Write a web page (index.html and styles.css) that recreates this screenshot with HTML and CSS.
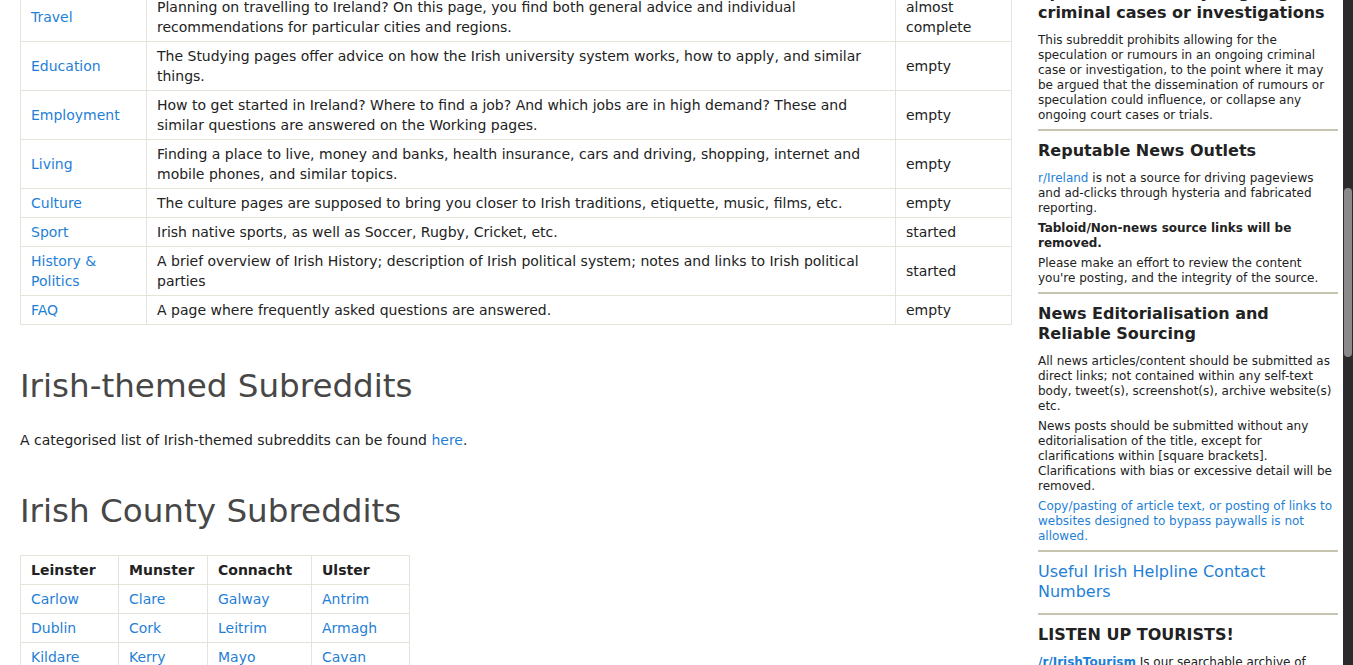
FILE: index.html
```html
<!DOCTYPE html>
<html lang="en">
<head>
<meta charset="utf-8">
<title>Ireland wiki</title>
<link rel="stylesheet" href="styles.css">
</head>
<body>
<div class="page">
  <main class="main">
    <table class="topics">
      <colgroup><col class="c1"><col class="c2"><col class="c3"></colgroup>
      <tbody>
        <tr><td><a href="#">Travel</a></td><td>Planning on travelling to Ireland? On this page, you find both general advice and individual recommendations for particular cities and regions.</td><td>almost complete</td></tr>
        <tr><td><a href="#">Education</a></td><td>The Studying pages offer advice on how the Irish university system works, how to apply, and similar things.</td><td>empty</td></tr>
        <tr><td><a href="#">Employment</a></td><td>How to get started in Ireland? Where to find a job? And which jobs are in high demand? These and similar questions are answered on the Working pages.</td><td>empty</td></tr>
        <tr><td><a href="#">Living</a></td><td>Finding a place to live, money and banks, health insurance, cars and driving, shopping, internet and mobile phones, and similar topics.</td><td>empty</td></tr>
        <tr><td><a href="#">Culture</a></td><td>The culture pages are supposed to bring you closer to Irish traditions, etiquette, music, films, etc.</td><td>empty</td></tr>
        <tr><td><a href="#">Sport</a></td><td>Irish native sports, as well as Soccer, Rugby, Cricket, etc.</td><td>started</td></tr>
        <tr><td><a href="#">History &amp; Politics</a></td><td>A brief overview of Irish History; description of Irish political system; notes and links to Irish political parties</td><td>started</td></tr>
        <tr><td><a href="#">FAQ</a></td><td>A page where frequently asked questions are answered.</td><td>empty</td></tr>
      </tbody>
    </table>

    <h2 class="title">Irish-themed Subreddits</h2>
    <p class="lead">A categorised list of Irish-themed subreddits can be found <a href="#">here</a>.</p>

    <h2 class="title">Irish County Subreddits</h2>
    <table class="counties">
      <colgroup><col class="k1"><col class="k2"><col class="k3"><col class="k4"></colgroup>
      <thead>
        <tr><th>Leinster</th><th>Munster</th><th>Connacht</th><th>Ulster</th></tr>
      </thead>
      <tbody>
        <tr><td><a href="#">Carlow</a></td><td><a href="#">Clare</a></td><td><a href="#">Galway</a></td><td><a href="#">Antrim</a></td></tr>
        <tr><td><a href="#">Dublin</a></td><td><a href="#">Cork</a></td><td><a href="#">Leitrim</a></td><td><a href="#">Armagh</a></td></tr>
        <tr><td><a href="#">Kildare</a></td><td><a href="#">Kerry</a></td><td><a href="#">Mayo</a></td><td><a href="#">Cavan</a></td></tr>
      </tbody>
    </table>
  </main>

  <aside class="sidebar">
    <section class="block">
      <h3 class="side-h">Speculation on any ongoing<br>criminal cases or investigations</h3>
      <p class="side-p">This subreddit prohibits allowing for the speculation or rumours in an ongoing criminal case or investigation, to the point where it may be argued that the dissemination of rumours or speculation could influence, or collapse any ongoing court cases or trials.</p>
    </section>
    <section class="block">
      <h3 class="side-h">Reputable News Outlets</h3>
      <p class="side-p"><a href="#">r/Ireland</a> is not a source for driving pageviews and ad-clicks through hysteria and fabricated reporting.</p>
      <p class="side-p strong">Tabloid/Non-news source links will be removed.</p>
      <p class="side-p">Please make an effort to review the content you're posting, and the integrity of the source.</p>
    </section>
    <section class="block">
      <h3 class="side-h">News Editorialisation and Reliable Sourcing</h3>
      <p class="side-p">All news articles/content should be submitted as direct links; not contained within any self-text body, tweet(s), screenshot(s), archive website(s) etc.</p>
      <p class="side-p">News posts should be submitted without any editorialisation of the title, except for clarifications within [square brackets]. Clarifications with bias or excessive detail will be removed.</p>
      <p class="side-p"><a href="#">Copy/pasting of article text, or posting of links to websites designed to bypass paywalls is not allowed.</a></p>
    </section>
    <section class="block">
      <h3 class="side-link"><a href="#">Useful Irish Helpline Contact Numbers</a></h3>
    </section>
    <section class="block last">
      <h3 class="side-h">LISTEN UP TOURISTS!</h3>
      <p class="side-p"><a href="#" class="bold-link">/r/IrishTourism</a> Is our searchable archive of questions and answers for visitors.</p>
    </section>
  </aside>

  <div class="scrollbar"><div class="thumb"></div></div>
</div>
</body>
</html>
```

FILE: styles.css
```css
html, body {
  margin: 0;
  padding: 0;
  background: #ffffff;
}

body {
  font-family: "DejaVu Sans", Verdana, sans-serif;
  color: #222222;
}

a {
  color: #1f7fd6;
  text-decoration: none;
}

.page {
  display: flex;
  align-items: flex-start;
  height: 665px;
  overflow: hidden;
}

/* ---------- main column ---------- */
.main {
  flex: none;
  width: 992px;
  margin-left: 20px;
  margin-top: -8px;
  font-size: 14px;
  line-height: 20px;
}

.topics,
.counties {
  border-collapse: collapse;
  table-layout: fixed;
}

.topics {
  width: 992px;
}

.topics td,
.counties td,
.counties th {
  border: 1px solid #e6e3da;
  padding: 4px 10px;
  vertical-align: middle;
  text-align: left;
}

.c1 { width: 126px; }
.c3 { width: 116px; }

.title {
  margin: 42px 0 25px;
  font-size: 32.6px;
  line-height: 38px;
  font-weight: normal;
  color: #474747;
}

.lead {
  margin: 0;
}

.counties {
  width: 389px;
}

.counties th {
  font-weight: bold;
  color: #222222;
}

.k1 { width: 98px; }
.k2 { width: 89px; }
.k3 { width: 104px; }
.k4 { width: 98px; }

/* ---------- sidebar ---------- */
.sidebar {
  flex: none;
  width: 300px;
  margin-left: 26px;
  margin-top: -17px;
}

.block {
  padding: 0 0 1px;
  border-bottom: 2px solid #c8c4b2;
  margin-bottom: 10px;
}

.block.last {
  border-bottom: none;
}

.side-h {
  margin: 0 0 10px;
  font-size: 16px;
  line-height: 20px;
  font-weight: bold;
  color: #222222;
}

.side-link {
  margin: 0 0 10px;
  font-size: 16px;
  line-height: 20px;
  font-weight: normal;
}

.side-p {
  margin: 0 0 5px;
  font-size: 12px;
  line-height: 15px;
}

.side-p.strong {
  font-weight: bold;
}

.bold-link {
  font-weight: bold;
}

/* ---------- scrollbar ---------- */
.scrollbar {
  flex: none;
  align-self: stretch;
  width: 10px;
  margin-left: 5px;
  background: #2b2b2b;
}

.thumb {
  width: 8px;
  height: 169px;
  margin: 188px 0 0 1px;
  border-radius: 4px;
  background: #8a8a8a;
}
```
